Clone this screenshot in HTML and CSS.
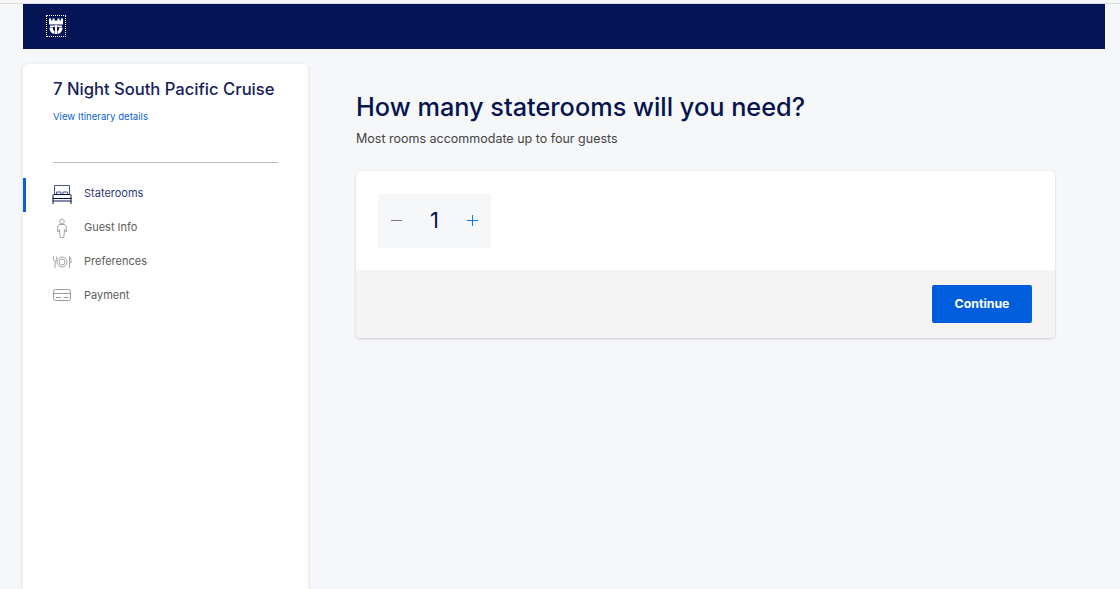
FILE: index.html
```html
<!DOCTYPE html>
<html lang="en">
<head>
<meta charset="utf-8">
<title>Stateroom selection</title>
<link rel="stylesheet" href="styles.css">
</head>
<body>
<div class="shell">
  <header class="topbar">
    <a class="logo" href="#">
      <svg width="18" height="20" viewBox="0 0 18 20"><path fill="#fff" d="M2 2.500h2v2h1.500v-2h2v2h3v-2h2v2h1.500v-2h2V8.500H2zM3 9.500h4.800v1.500H3zM10.200 9.500H15v1.500h-4.800zM8 9h2v9H8zM2.500 11.500H6v1.800c0 .8.700 1.300 1.500 1.600V18C4.500 17.500 2.500 15 2.500 11.500zM15.500 11.500H12v1.800c0 .8-.7 1.300-1.500 1.600V18c3-.5 5-3 5-6.500z"/></svg>
    </a>
  </header>
  <div class="columns">
    <aside class="sidebar">
      <h2 class="cruise">7 Night South Pacific Cruise</h2>
      <a class="details" href="#">View Itinerary details</a>
      <hr class="rule">
      <nav class="steps">
        <div class="step active">
          <svg class="ico" width="20" height="22" viewBox="0 0 20 22" fill="none" stroke="#04144f"><path stroke="#4a5488" d="M2.500 12V3.500h15V12M4.500 12V10h4.500v2M11 12v-2h4.500v2"/><path d="M1.500 12.500h17M.5 16.500h19M.5 19h19" stroke-width="1"/><path d="M1 12.500V22M19 12.500V22" stroke-width="1"/></svg>
          <span>Staterooms</span>
        </div>
        <div class="step">
          <svg class="ico" width="20" height="22" viewBox="0 0 20 22" fill="none" stroke="#8f8f8f" stroke-width=".8"><circle cx="10" cy="5.500" r="2.300"/><path d="M8 8.500h4c1.500.3 2.200 1 2.300 2.500l.2 4.500h-1.200l-.8-2-.7 8H8.200l-.7-8-.8 2H5.500l.2-4.500c.1-1.500.8-2.200 2.300-2.500z"/></svg>
          <span>Guest Info</span>
        </div>
        <div class="step">
          <svg class="ico" width="20" height="22" viewBox="0 0 20 22" fill="none" stroke="#8f8f8f" stroke-width=".8"><circle cx="10" cy="12" r="5"/><circle cx="10" cy="12" r="3"/><path d="M1.800 6.500c-.6 2-.6 4 1.300 5 1.900-1 1.900-3 1.300-5M3.100 11.500V18M17.500 6.500c1.500 1 1.700 4 1.700 6h-1.700zM17.500 12.500V18"/></svg>
          <span>Preferences</span>
        </div>
        <div class="step">
          <svg class="ico" width="20" height="22" viewBox="0 0 20 22" fill="none" stroke="#8f8f8f" stroke-width=".9"><rect x="1.500" y="5.500" width="17" height="11" rx="2"/><path d="M1.500 9.500h17M4 13.500h5M11.500 13.500h5"/></svg>
          <span>Payment</span>
        </div>
      </nav>
    </aside>
    <main class="content">
      <h1 class="title">How many staterooms will you need?</h1>
      <p class="sub">Most rooms accommodate up to four guests</p>
      <section class="card">
        <div class="card-body">
          <div class="stepper">
            <span class="minus"></span>
            <span class="count">1</span>
            <span class="plus"></span>
          </div>
        </div>
        <div class="card-foot">
          <button class="continue">Continue</button>
        </div>
      </section>
    </main>
  </div>
</div>
</body>
</html>
```
FILE: styles.css
```css
* { box-sizing: border-box; }
html, body { margin: 0; height: 100%; overflow: hidden; }
body {
  background: #f6f7f9;
  font-family: Inter, "Liberation Sans", sans-serif;
}
.shell { height: 100%; padding-right: 15px; padding-left: 23px; padding-top: 4px; position: relative; }
.shell::before { content: ""; position: absolute; left: 0; right: 0; top: 3px; height: 1px; background: #dcdcdc; }
.topbar {
  height: 45px;
  background: #041555;
  padding: 11px 0 0 23px;
}
.logo { display: block; width: 20px; height: 22px; border: 1px dotted #fff; line-height: 0; }
.columns { display: flex; margin-top: 15px; }
.sidebar {
  width: 285px;
  height: 525px;
  flex: none;
  background: #fff;
  border-radius: 5px 5px 0 0;
  box-shadow: 0 1px 4px rgba(30, 40, 90, .12);
  padding: 14px 30px 0;
}
.cruise { margin: 0; font: 500 16.6px/22px Inter, sans-serif; color: #14215a; white-space: nowrap; }
.details { display: block; margin-top: 10px; font: 400 9.6px/14px Inter, sans-serif; color: #0a5fd6; text-decoration: none; }
.rule { margin: 38px 0 0; border: 0; border-top: 1px solid #bcbcbc; }
.steps { margin: 15px 0 0 -30px; }
.step { height: 34px; display: flex; align-items: center; padding: 0 0 4px 29px; font: 400 11px/14px Inter, sans-serif; color: #5c5c5c; gap: 12px; }
.step.active { color: #2f3a78; border-left: 3px solid #0a5fd6; padding-left: 26px; }
.ico { flex: none; overflow: visible; }
.content { flex: 1; padding: 28px 50px 0 48px; }
.title { margin: 0; font: 500 25.3px/30px Inter, sans-serif; color: #04144f; white-space: nowrap; }
.sub { margin: 8px 0 0; font: 400 12.5px/18px Inter, sans-serif; color: #444; }
.card {
  margin-top: 23px;
  background: #fff;
  border-radius: 5px;
  box-shadow: 0 1px 3px rgba(30, 40, 90, .22);
  overflow: hidden;
}
.card-body { height: 99px; padding: 23px 22px 0; }
.stepper { width: 113px; height: 54px; padding: 0 13px 2px; background: #f6f7f9; display: flex; align-items: center; justify-content: space-between; }
.minus { width: 11px; height: 1px; background: #777; }
.count { font: 400 22px Inter, sans-serif; color: #04144f; }
.plus { width: 11px; height: 11px; background: linear-gradient(#0b7de0, #0b7de0) center / 100% 1px no-repeat, linear-gradient(#0b7de0, #0b7de0) center / 1px 100% no-repeat; }
.card-foot { height: 68px; background: #f4f4f4; display: flex; justify-content: flex-end; align-items: center; padding-right: 23px; }
.continue { width: 100px; height: 38px; padding: 0 0 2px; background: #005edc; color: #fff; border: 0; border-radius: 2px; font: 700 12.3px Inter, sans-serif; }
```
